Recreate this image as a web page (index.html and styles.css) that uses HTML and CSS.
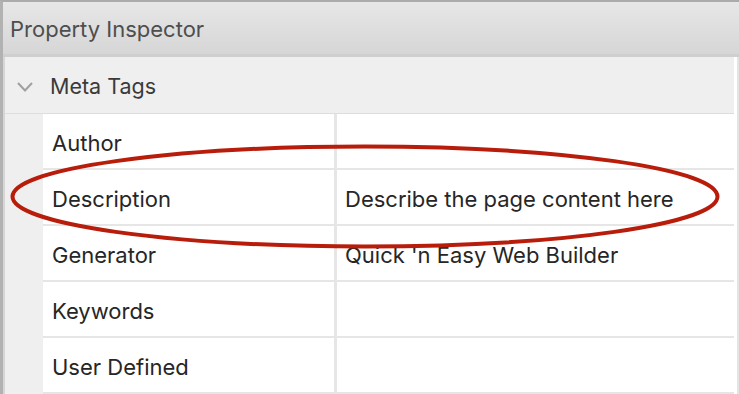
FILE: index.html
```html
<!DOCTYPE html>
<html>
<head>
<meta charset="utf-8">
<link rel="stylesheet" href="styles.css">
</head>
<body>
<div class="window">
  <div class="header">Property Inspector</div>
  <div class="content">
    <div class="inner">
      <div class="group">
        <svg class="chev" width="16" height="10" viewBox="0 0 16 10"><path d="M1 1 L8 8.5 L15 1" fill="none" stroke="#a0a0a0" stroke-width="2"/></svg>
        <span>Meta Tags</span>
      </div>
      <div class="table">
        <div class="cell label">Author</div><div class="cell value"></div>
        <div class="cell label">Description</div><div class="cell value">Describe the page content here</div>
        <div class="cell label">Generator</div><div class="cell value">Quick 'n Easy Web Builder</div>
        <div class="cell label">Keywords</div><div class="cell value"></div>
        <div class="cell label">User Defined</div><div class="cell value"></div>
      </div>
    </div>
    <div class="rgutter"></div>
  </div>
  <svg class="mark" width="739" height="394" viewBox="0 0 739 394"><ellipse cx="365" cy="196.5" rx="352.5" ry="50" fill="none" stroke="#b81c0a" stroke-width="4"/></svg>
</div>
</body>
</html>
```

FILE: styles.css
```css
html, body { margin: 0; padding: 0; }
body {
  width: 739px;
  height: 394px;
  overflow: hidden;
  background: #ffffff;
  font-family: Inter, "Liberation Sans", sans-serif;
}
.window {
  position: relative;
  height: 394px;
  box-sizing: border-box;
  border-top: 2px solid #ababab;
  border-left: 3px solid #b2b2b2;
  display: flex;
  flex-direction: column;
}
.header {
  height: 55px;
  box-sizing: border-box;
  padding-left: 7px;
  padding-top: 14px;
  font-size: 22px;
  color: #4e4e4e;
  background: linear-gradient(#e7e7e7, #d6d6d6);
  border-bottom: 3px solid #cfcfcf;
  flex: none;
}
.content {
  flex: 1;
  display: flex;
  border-left: 2px solid #d6d6d6;
  min-height: 0;
}
.inner {
  width: 729px;
  background: #efefef;
  display: flex;
  flex-direction: column;
  flex: none;
}
.rgutter {
  flex: 1;
  border-right: 2px solid #e4e4e4;
  background: #fff;
}
.group {
  height: 57px;
  box-sizing: border-box;
  border-bottom: 1px solid #dddddd;
  display: flex;
  align-items: center;
  padding-left: 12px;
  gap: 17px;
  font-size: 21.5px;
  color: #3a3a3a;
  padding-top: 2px;
  flex: none;
}
.chev { flex: none; margin-top: 2px; }
.table {
  margin-left: 38px;
  display: grid;
  grid-template-columns: 291px 397px;
  grid-auto-rows: 54px;
  column-gap: 3px;
  row-gap: 2px;
  background: #e6e6e6;
  padding-bottom: 2px;
}
.cell {
  background: #ffffff;
  display: flex;
  align-items: center;
  font-size: 22px;
  color: #262626;
  padding-top: 3px;
  box-sizing: border-box;
}
.label { padding-left: 9px; }
.value { padding-left: 8px; }
.mark {
  position: absolute;
  left: -3px;
  top: -2px;
  pointer-events: none;
}
```
